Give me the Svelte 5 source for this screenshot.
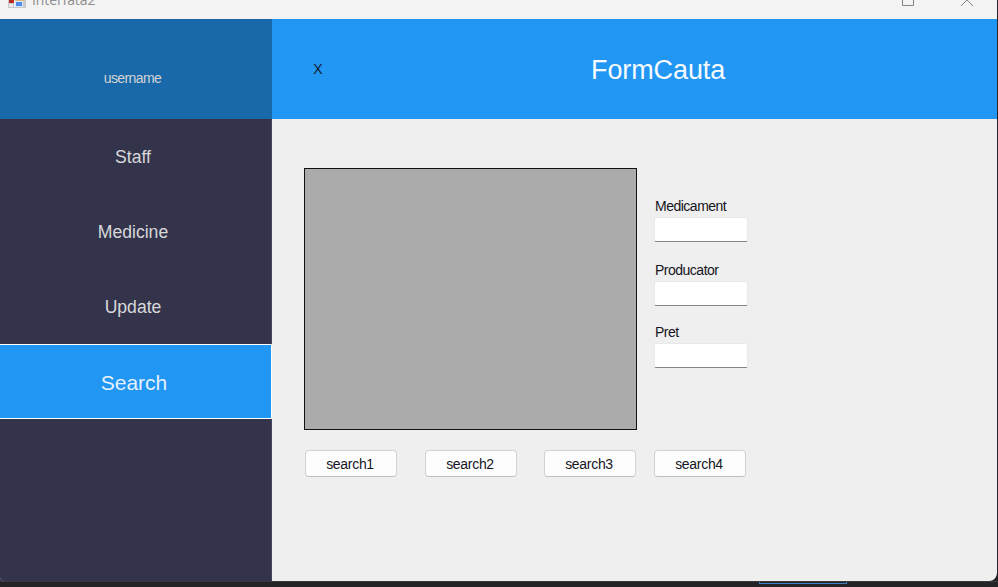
<script>
  const menu = ['Staff', 'Medicine', 'Update', 'Search'];
  const fields = ['Medicament', 'Producator', 'Pret'];
  const actions = ['search1', 'search2', 'search3', 'search4'];
  let active = $state('Search');
</script>

<div class="desktop">
  <div class="window">
    <div class="titlebar">
      <svg class="appicon" width="18" height="8" viewBox="0 0 18 8">
        <rect width="18" height="8" fill="#c9c9cb" />
        <rect x="1" y="0" width="5" height="3" fill="#b92d20" />
        <rect x="6" y="0" width="1" height="7" fill="#f5f5f5" />
        <rect x="1" y="4" width="4" height="3" fill="#e8e8e8" />
        <rect x="7" y="0" width="9" height="1" fill="#d9b878" />
        <rect x="7" y="1" width="8" height="6" fill="#dbe8fb" />
        <rect x="8" y="2" width="6" height="4" fill="#4d8ce8" />
      </svg>
      <span class="caption">Interfata2</span>
      <svg class="controls" width="76" height="8" viewBox="0 0 76 8" fill="none" stroke="#858585">
        <path d="M2.500 -2V5.500H13.500V-2" />
        <path d="M61 6L67 0L73 6" />
      </svg>
    </div>
    <div class="content">
      <nav class="sidebar">
        <div class="user"><span>username</span></div>
        {#each menu as item}
          <button class="item" class:active={item === active} onclick={() => (active = item)}><span>{item}</span></button>
        {/each}
      </nav>
      <main>
        <header>
          <button class="close">X</button>
          <h1>FormCauta</h1>
        </header>
        <div class="form">
          <div class="grid"></div>
          <div class="fields">
            {#each fields as field}
              <label><span>{field}</span><input type="text" /></label>
            {/each}
          </div>
        </div>
        <div class="actions">
          {#each actions as action}
            <button>{action}</button>
          {/each}
        </div>
      </main>
    </div>
  </div>
  <div class="behind"><i></i><b></b></div>
</div>

<style>
  :global(body) { overflow: hidden; }
  .desktop {
    width: 998px; height: 587px; background: #242428; overflow: hidden;
    font-family: "Liberation Sans", Arial, sans-serif; box-sizing: border-box;
  }
  button { font: inherit; border: 0; padding: 0; margin: 0; background: none; }
  .window {
    width: 997px; height: 581px; background: #efefef; overflow: hidden;
    border-radius: 0 0 8px 4px; display: flex; flex-direction: column;
  }
  .titlebar { height: 19px; flex: none; background: #f3f3f3; display: flex; align-items: flex-start; padding-left: 8px; }
  .caption {
    font-family: "Open Sans", "Noto Sans", sans-serif; font-size: 14px; line-height: 20px;
    margin: -10px 0 0 6px; color: #8e8e8e; letter-spacing: -0.1px;
  }
  .controls { margin-left: auto; margin-right: 21px; }
  .content { display: flex; flex: 1; min-height: 0; }
  .sidebar { width: 272px; flex: none; background: #33334c; display: flex; flex-direction: column; box-sizing: border-box; border-right: 1px solid #45455b; }
  .user {
    height: 100px; width: 272px; flex: none; background: #1969aa; color: #d3d3d3;
    display: flex; align-items: center; justify-content: center; box-sizing: border-box;
    padding: 17px 7px 0 0; font-size: 14px; letter-spacing: -0.6px;
  }
  .item { height: 75px; width: 272px; flex: none; color: #d8d8d8; font-size: 17.6px; box-sizing: border-box; padding: 2px 6px 0 0; }
  .item.active {
    background: #2196f3; color: #e5f1fc; font-size: 21px; border: solid #fff; border-width: 1px 1px 1px 0;
    padding-right: 3px;
  }
  main { flex: 1; display: flex; flex-direction: column; }
  header { height: 100px; flex: none; background: #2196f3; display: flex; align-items: center; }
  .close { width: 12px; margin-left: 40px; font-size: 14px; color: #14202c; }
  h1 { margin: 2px 0 0 267px; font-weight: 400; font-size: 27px; line-height: 32px; letter-spacing: -0.1px; color: #f5faff; }
  .form { display: flex; padding: 49px 0 0 32px; }
  .grid { width: 333px; height: 262px; box-sizing: border-box; border: 1px solid #111; background: #ababab; }
  .fields { margin: 30px 0 0 17px; width: 93px; }
  label { display: block; height: 64px; color: #15151d; font-size: 14px; letter-spacing: -0.5px; }
  label:nth-child(2) { height: 62px; }
  label span { display: block; height: 19px; line-height: 16px; padding-left: 1px; }
  input {
    display: block; width: 94px; height: 25px; box-sizing: border-box; padding: 2px 4px;
    border: 1px solid #e9e9e9; border-bottom-color: #868686; border-radius: 2px; background: #fff; font: inherit;
  }
  .actions { display: flex; padding: 20px 0 0 33px; }
  .actions button {
    width: 92px; height: 27px; border: 1px solid #d2d2d2; border-bottom-color: #bfbfbf; border-radius: 4px;
    background: #fdfdfd; font-size: 14px; letter-spacing: -0.3px; color: #15151d; padding: 0 2px 0 0; margin-right: 28px;
  }
  .actions button:nth-child(2) { margin-right: 27px; }
  .actions button:nth-child(3) { margin-right: 18px; }
  .behind { height: 6px; display: flex; box-sizing: border-box; border-top: 1px solid #3a3a3d; }
  .behind i { width: 759px; }
  .behind b { width: 88px; height: 2px; box-sizing: border-box; border: solid #3b7fc4; border-width: 0 1px 1px; }
</style>
